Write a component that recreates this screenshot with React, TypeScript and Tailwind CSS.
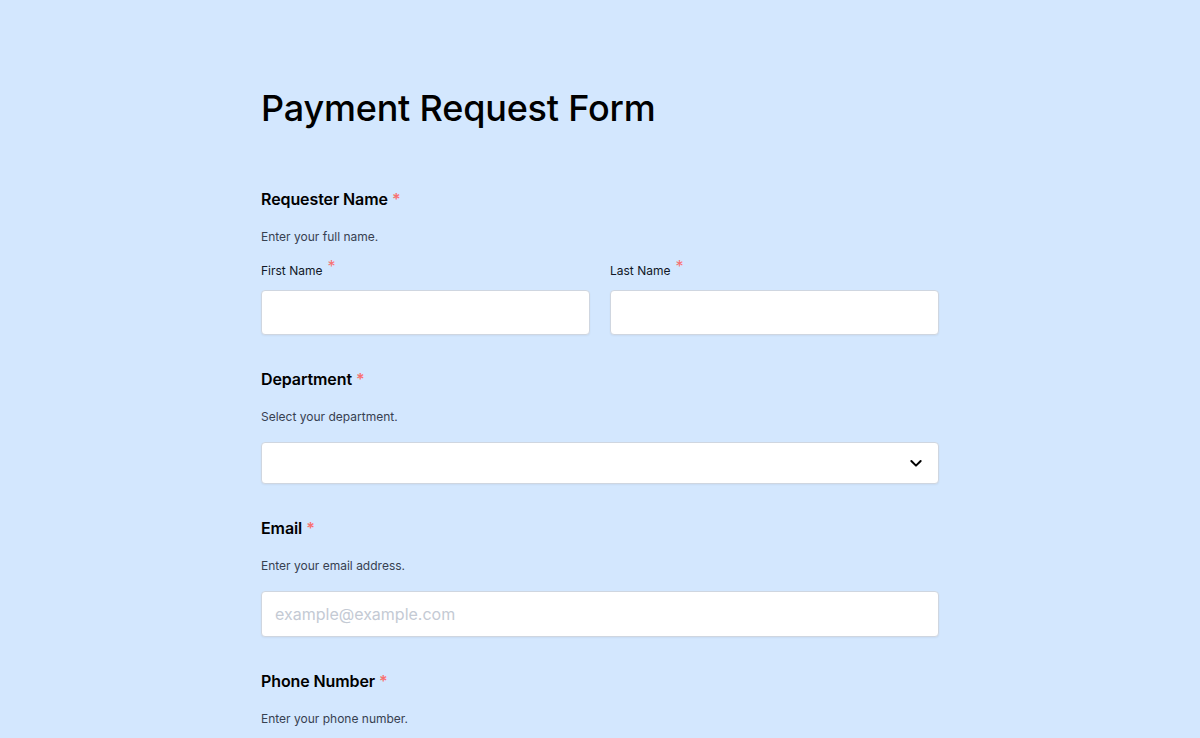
import React from "react";

function Req({ small = false }: { small?: boolean }) {
  return small ? (
    <span className="relative top-[-3px] ml-[5px] text-[16px] leading-none text-[#f87171]">*</span>
  ) : (
    <span className="ml-1 text-[#f87171]">*</span>
  );
}

function FieldLabel({ children }: { children: React.ReactNode }) {
  return (
    <div className="text-[16px] leading-6 font-semibold tracking-[-0.1px] text-black">
      {children}
      <Req />
    </div>
  );
}

function Hint({ children }: { children: React.ReactNode }) {
  return <div className="mt-[14px] text-[12px] leading-6 text-[#374151]">{children}</div>;
}

const inputCls =
  "w-full rounded-[4px] border border-[#cfd6e0] bg-white px-[13px] text-[16px] text-black outline-none shadow-[0_1px_2px_rgba(0,0,0,0.05)] placeholder:text-[#c4cad4]";

export default function App() {
  return (
    <div className="min-h-screen w-full bg-[#d3e7fe]" style={{ fontFamily: "Inter, 'Noto Sans', sans-serif" }}>
      <div className="mx-auto w-[678px] pt-[88px]">
        <h1 className="text-[36px] leading-10 font-medium tracking-[-0.2px] text-black">Payment Request Form</h1>

        <section className="mt-[59px]">
          <FieldLabel>Requester Name</FieldLabel>
          <Hint>Enter your full name.</Hint>
          <div className="mt-[10px] grid grid-cols-2 gap-5">
            <div>
              <div className="h-6 text-[12px] leading-6 text-[#111827]">
                First Name
                <Req small />
              </div>
              <input className={`${inputCls} mt-[7px] h-[45px]`} />
            </div>
            <div>
              <div className="h-6 text-[12px] leading-6 text-[#111827]">
                Last Name
                <Req small />
              </div>
              <input className={`${inputCls} mt-[7px] h-[45px]`} />
            </div>
          </div>
        </section>

        <section className="mt-[32px]">
          <FieldLabel>Department</FieldLabel>
          <Hint>Select your department.</Hint>
          <div className="relative mt-[13px] h-[42px] rounded-[4px] border border-[#cfd6e0] bg-white shadow-[0_1px_2px_rgba(0,0,0,0.05)]">
            <svg
              className="absolute right-[14px] top-1/2 -translate-y-1/2"
              width="16"
              height="16"
              viewBox="0 0 24 24"
              fill="none"
              stroke="black"
              strokeWidth="3"
              strokeLinecap="round"
              strokeLinejoin="round"
            >
              <path d="M5 9l7 7 7-7" />
            </svg>
          </div>
        </section>

        <section className="mt-[32px]">
          <FieldLabel>Email</FieldLabel>
          <Hint>Enter your email address.</Hint>
          <input className={`${inputCls} mt-[13px] h-[46px]`} placeholder="example@example.com" />
        </section>

        <section className="mt-[32px]">
          <FieldLabel>Phone Number</FieldLabel>
          <Hint>Enter your phone number.</Hint>
        </section>
      </div>
    </div>
  );
}
